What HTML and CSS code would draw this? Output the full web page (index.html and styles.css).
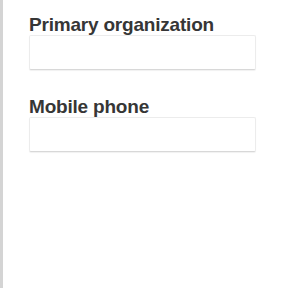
FILE: index.html
```html
<!DOCTYPE html>
<html lang="en">
<head>
    <meta charset="UTF-8">
    <meta name="viewport" content="width=device-width, initial-scale=1.0">
    <title>Profile</title>
    <link rel="stylesheet" href="styles.css">
</head>
<body>
    <div class="panel">
        <div class="field">
            <label class="field-label" for="org">Primary organization</label>
            <input class="field-input" id="org" type="text">
        </div>
        <div class="field">
            <label class="field-label" for="phone">Mobile phone</label>
            <input class="field-input" id="phone" type="tel">
        </div>
    </div>
</body>
</html>
```

FILE: styles.css
```css
html, body {
    height: 100%;
}

body {
    margin: 0;
    background-color: #fff;
    font-family: "Liberation Sans", Arial, sans-serif;
}

.panel {
    box-sizing: border-box;
    height: 100%;
    border-left: 3px solid #d4d4d4;
    padding: 15px 32px 0 26px;
}

.field {
    display: flex;
    flex-direction: column;
    margin-bottom: 27px;
}

.field-label {
    font-size: 19px;
    font-weight: bold;
    letter-spacing: -0.2px;
    color: #363636;
    line-height: 20px;
}

.field-input {
    box-sizing: border-box;
    width: 227px;
    height: 35px;
    margin: 0;
    border: 1px solid #ececec;
    border-bottom-color: #d8d8d8;
    border-radius: 2px;
    background: #fff;
    box-shadow: 0 1px 1px rgba(0, 0, 0, 0.06);
}
```
